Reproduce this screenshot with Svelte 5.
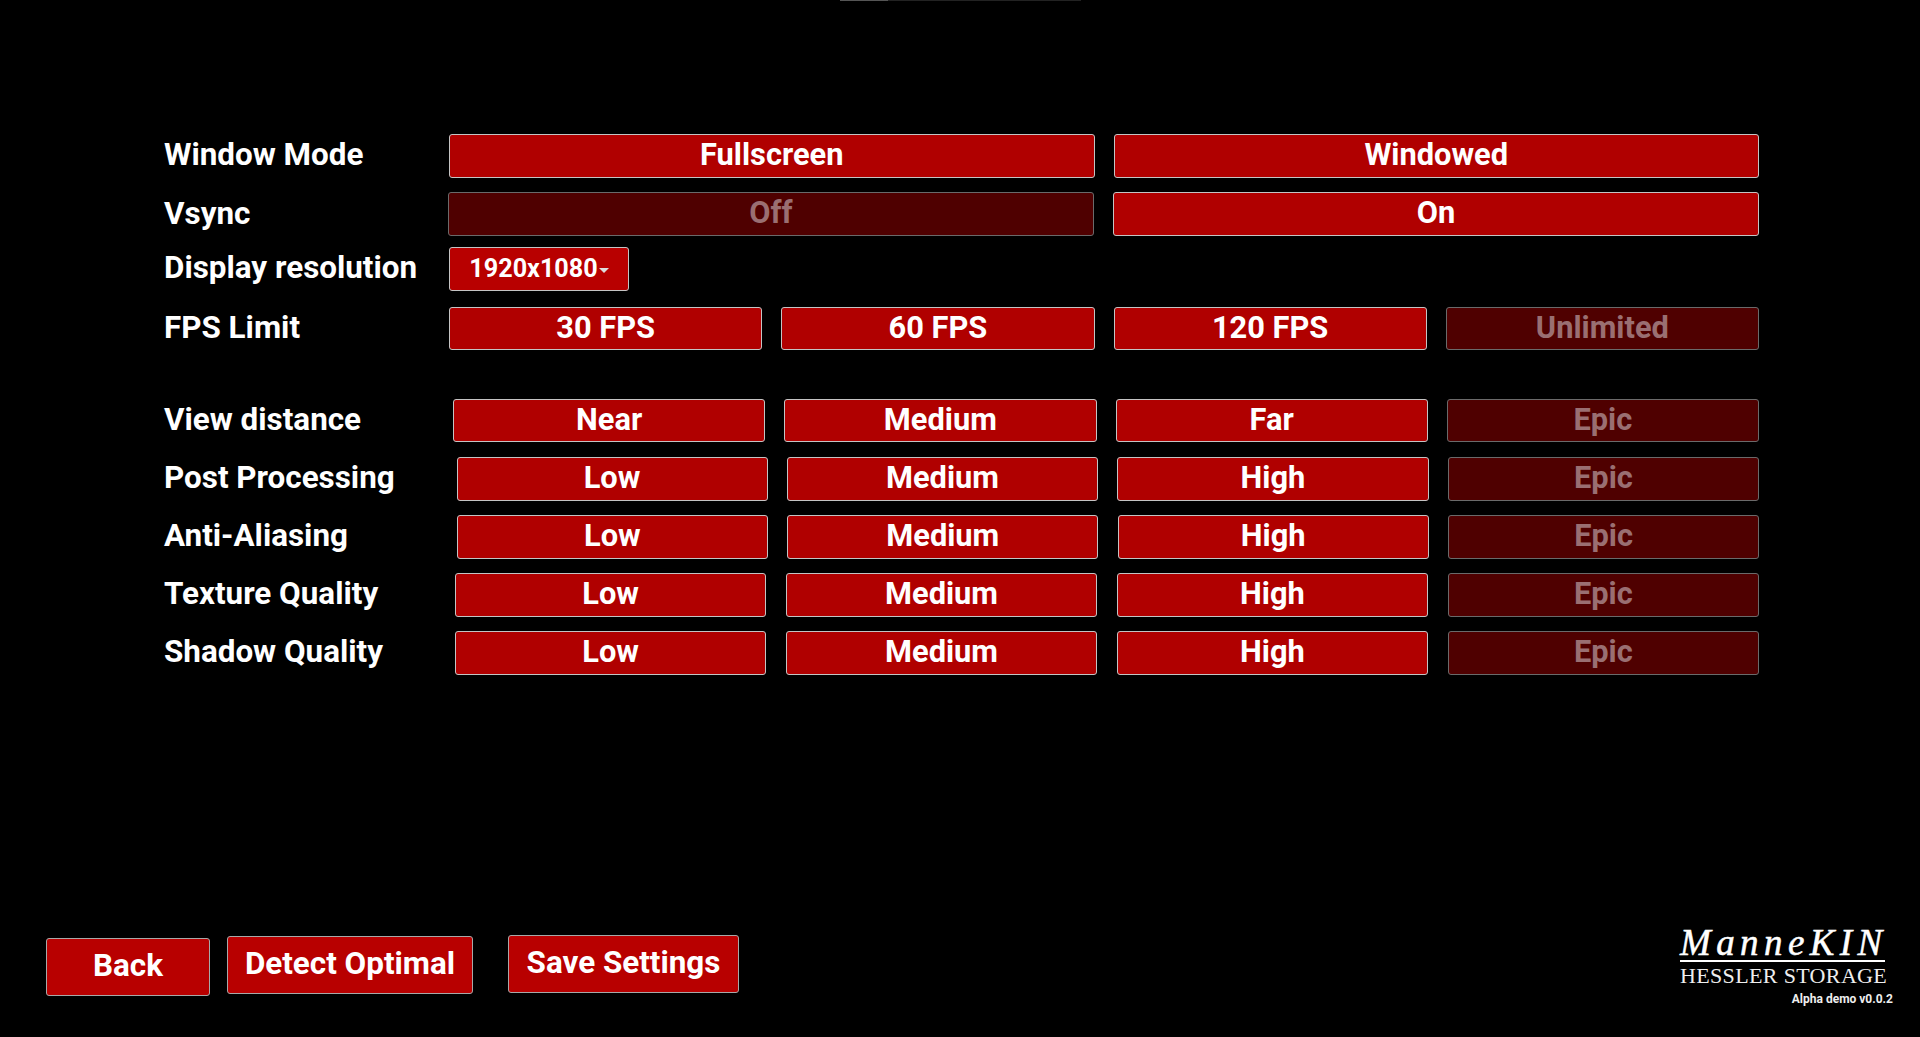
<script lang="ts">
  const rows = [
    { id: 'mode', label: 'Window Mode', opts: [['Fullscreen'], ['Windowed']] },
    { id: 'vsync', label: 'Vsync', opts: [['Off', 1], ['On']] },
    { id: 'res', label: 'Display resolution', dropdown: '1920x1080' },
    { id: 'fps', label: 'FPS Limit', opts: [['30 FPS'], ['60 FPS'], ['120 FPS'], ['Unlimited', 1]] },
    { id: 'view', label: 'View distance', opts: [['Near'], ['Medium'], ['Far'], ['Epic', 1]] },
    { id: 'post', label: 'Post Processing', opts: [['Low'], ['Medium'], ['High'], ['Epic', 1]] },
    { id: 'aa', label: 'Anti-Aliasing', opts: [['Low'], ['Medium'], ['High'], ['Epic', 1]] },
    { id: 'tex', label: 'Texture Quality', opts: [['Low'], ['Medium'], ['High'], ['Epic', 1]] },
    { id: 'shadow', label: 'Shadow Quality', opts: [['Low'], ['Medium'], ['High'], ['Epic', 1]] }
  ];
</script>

<div class="page">
  <div class="topbar"><div class="topbar-fill"></div></div>

  <div class="settings">
    {#each rows as r}
      <div class="row {r.id}">
        <div class="label">{r.label}</div>
        {#if r.dropdown}
          <button class="btn dropdown">{r.dropdown}<span class="caret"></span></button>
        {:else}
          <div class="opts">
            {#each r.opts as o}
              <button class="btn" class:off={o[1]}>{o[0]}</button>
            {/each}
          </div>
        {/if}
      </div>
    {/each}
  </div>

  <div class="footer">
    <button class="btn big back">Back</button>
    <button class="btn big detect">Detect Optimal</button>
    <button class="btn big save">Save Settings</button>

    <div class="brand">
      <div class="logo">
        <div class="logo-top">ManneKIN</div>
        <div class="logo-sub">HESSLER STORAGE</div>
      </div>
      <div class="version">Alpha demo v0.0.2</div>
    </div>
  </div>
</div>

<style>
  :global(body) {
    background: #000;
  }

  .page {
    height: 1037px;
    overflow: hidden;
    background: #000;
    display: flex;
    flex-direction: column;
    font-family: Roboto, "Liberation Sans", sans-serif;
    color: #fff;
  }

  .topbar {
    width: 241px;
    height: 1px;
    margin-left: 840px;
    background: #222;
  }
  .topbar-fill {
    width: 48px;
    height: 100%;
    background: #555;
  }

  .settings {
    margin-top: 133px;
    padding: 0 161px 0 164px;
    display: flex;
    flex-direction: column;
  }

  .row {
    display: flex;
    align-items: stretch;
    height: 44px;
  }
  .label {
    flex: none;
    width: 285px;
    font-size: 31.4px;
    font-weight: 700;
    line-height: 41px;
    white-space: nowrap;
  }
  .opts {
    flex: 1;
    display: grid;
    grid-auto-flow: column;
    grid-auto-columns: 1fr;
    column-gap: 19px;
  }

  .vsync { margin-top: 14px; }
  .vsync .label { width: 284px; line-height: 43px; }
  .res { margin-top: 11px; }
  .fps { margin-top: 16px; height: 43px; }
  .fps .btn { padding-bottom: 1px; }
  .view { margin-top: 49px; height: 43px; }
  .view .btn { padding-bottom: 0; }
  .view .label { width: 289px; }
  .post { margin-top: 15px; }
  .post .label { width: 292.5px; }
  .post .opts { column-gap: 19.4px; }
  .aa { margin-top: 14px; }
  .aa .label { width: 293px; }
  .aa .opts { column-gap: 19.6px; }
  .tex { margin-top: 14px; }
  .tex .label { width: 291px; }
  .tex .opts { column-gap: 19.7px; }
  .shadow { margin-top: 14px; }
  .shadow .label { width: 291px; }
  .shadow .opts { column-gap: 19.7px; }

  .btn {
    box-sizing: border-box;
    margin: 0;
    padding: 0 0 2px;
    background: #b00000;
    border: 1px solid #c4c4c4;
    border-radius: 3px;
    color: #fff;
    font-family: inherit;
    font-size: 30.8px;
    font-weight: 700;
    line-height: 1;
    white-space: nowrap;
  }
  .btn.off {
    background: #4f0000;
    border-color: #6a6a6a;
    color: #9a6f72;
  }
  .dropdown {
    width: 180px;
    padding: 0;
    background: #b80000;
    font-size: 25.2px;
  }
  .caret {
    display: inline-block;
    margin-left: 1px;
    vertical-align: 4px;
    border-top: 5px solid #ddd;
    border-left: 5.5px solid transparent;
    border-right: 5.5px solid transparent;
  }

  .footer {
    margin-top: auto;
    height: 102px;
    display: flex;
    align-items: flex-start;
    box-sizing: border-box;
  }
  .big {
    height: 58px;
    padding-bottom: 3px;
    background: #b80000;
    border-color: #a8a8a8;
    font-size: 31.4px;
  }
  .back {
    width: 164px;
    margin: 3px 0 0 46px;
  }
  .detect {
    width: 246px;
    margin: 1px 0 0 17px;
  }
  .save {
    width: 231px;
    margin-left: 35px;
  }

  .brand {
    margin-left: auto;
    width: 240px;
    display: flex;
    flex-direction: column;
    box-sizing: border-box;
  }
  .logo {
    width: 205px;
    margin-top: -6px;
  }
  .logo-top {
    height: 31px;
    border-bottom: 2px solid #fff;
    font-family: "Liberation Serif", serif;
    font-style: italic;
    font-size: 37px;
    line-height: 28px;
    letter-spacing: 5.4px;
    -webkit-text-stroke: 0.5px #fff;
    white-space: nowrap;
  }
  .logo-sub {
    margin-top: 2px;
    font-family: "Liberation Serif", serif;
    font-size: 22px;
    line-height: 24px;
    letter-spacing: 0.35px;
    color: #eee;
    white-space: nowrap;
  }
  .version {
    align-self: flex-end;
    margin: 4px 27px 0 0;
    font-size: 12px;
    font-weight: 700;
    line-height: 14px;
    color: #eee;
    white-space: nowrap;
  }
</style>
